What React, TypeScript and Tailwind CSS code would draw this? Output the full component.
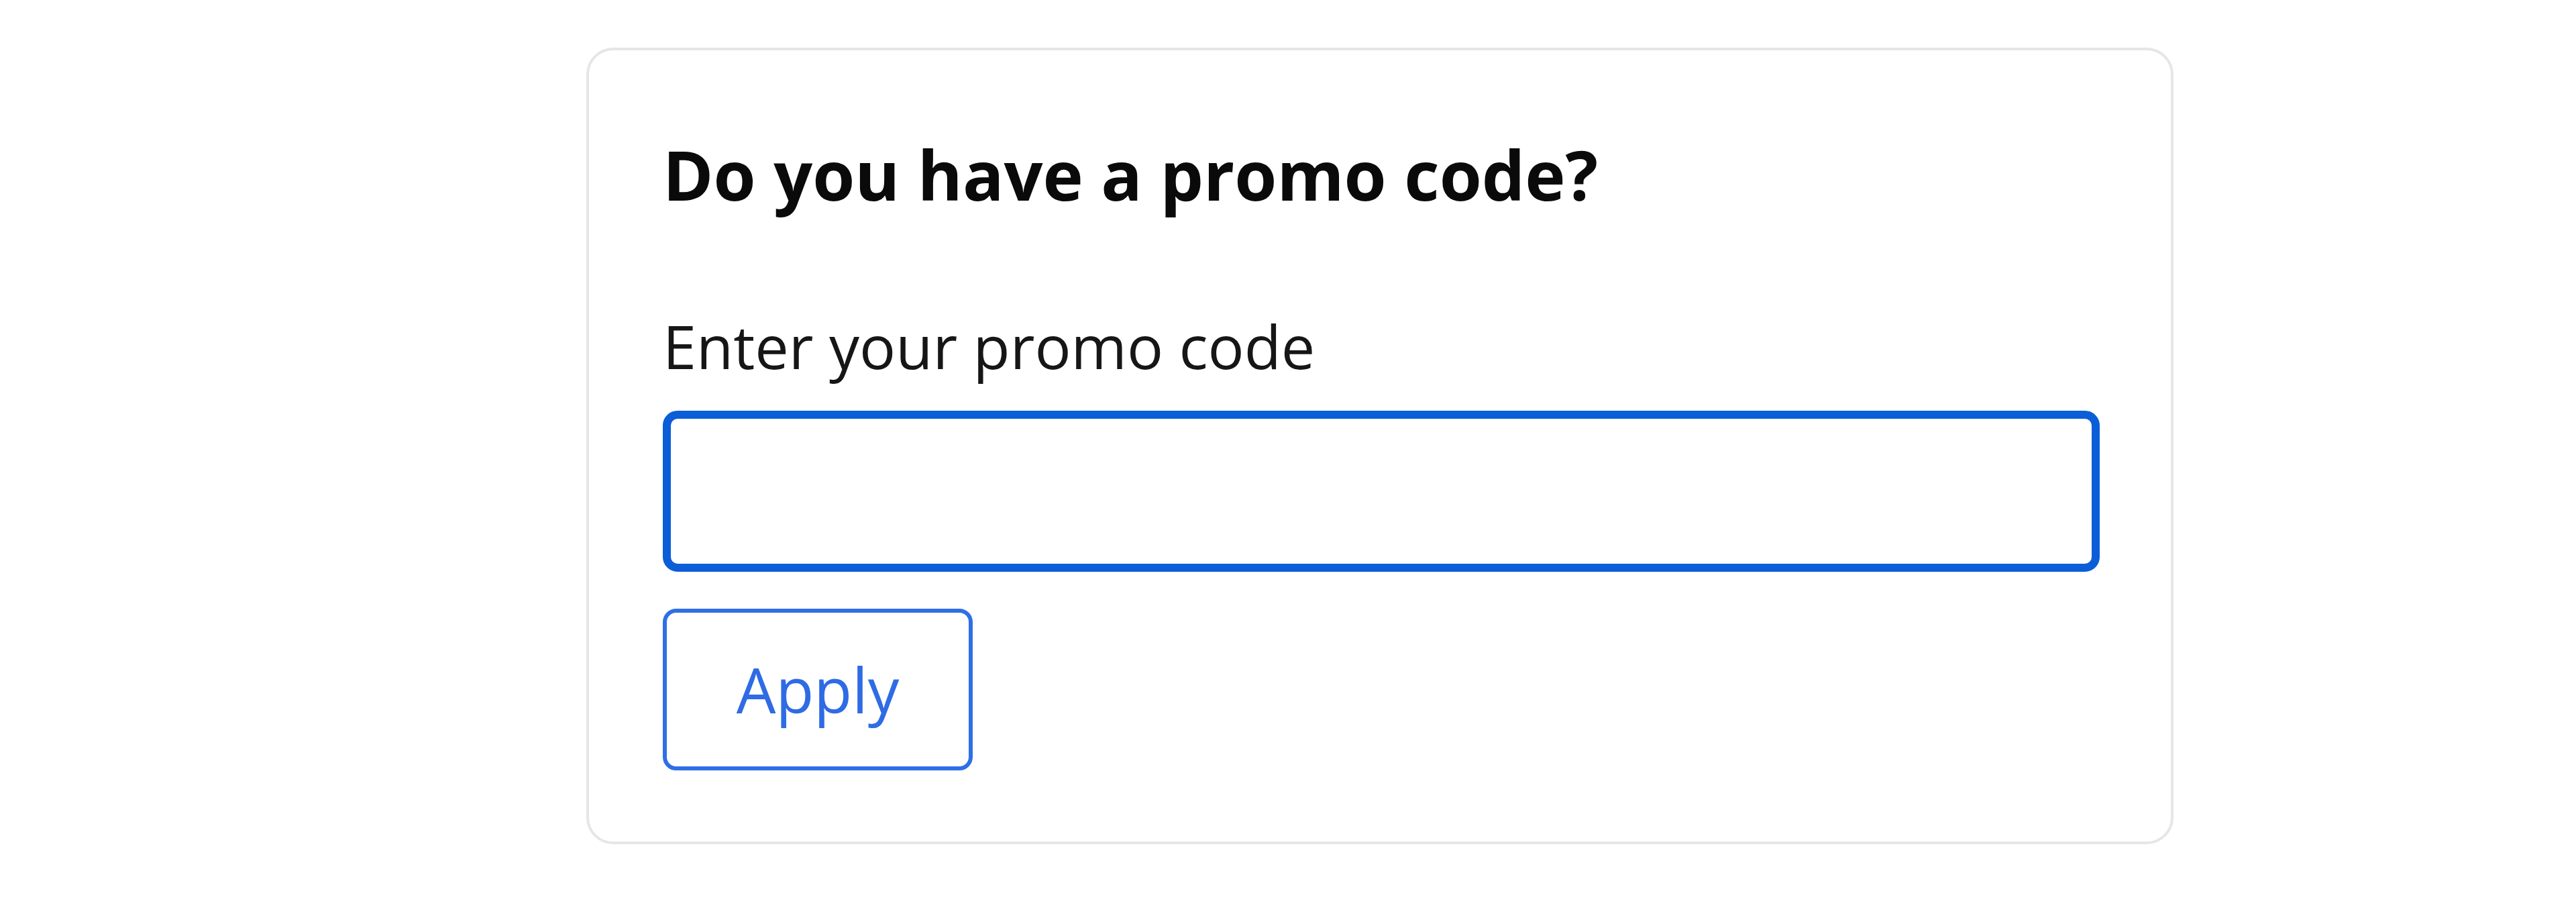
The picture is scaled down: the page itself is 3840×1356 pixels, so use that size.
import React from "react";

export default function App() {
  return (
    <div className="min-h-[1356px] w-[3840px] bg-white pl-[874px] pt-[71px]" style={{ fontFamily: '"Open Sans", "Noto Sans", sans-serif' }}>
      <div className="flex w-[2366px] flex-col rounded-[40px] border-[4px] border-[#e6e6e6] bg-white pb-[106px] pl-[110px] pr-[106px] pt-[124px]">
        <h2 className="text-[102px] font-bold leading-[122px] text-[#0a0a0a]">Do you have a promo code?</h2>
        <label htmlFor="promo" className="mt-[140px] text-[90px] leading-[108px] text-[#161616]">
          Enter your promo code
        </label>
        <input
          id="promo"
          type="text"
          className="mt-[43px] h-[240px] w-full rounded-[22px] border-[12px] border-[#0b5ed7] bg-white px-[40px] text-[90px] outline-none"
        />
        <div className="mt-[55px] flex">
          <button
            type="button"
            className="flex h-[241px] w-[462px] items-center justify-center rounded-[20px] border-[6px] border-[#2f6fe6] bg-white text-[93px] font-medium leading-none text-[#2f6be4]"
          >
            Apply
          </button>
        </div>
      </div>
    </div>
  );
}
